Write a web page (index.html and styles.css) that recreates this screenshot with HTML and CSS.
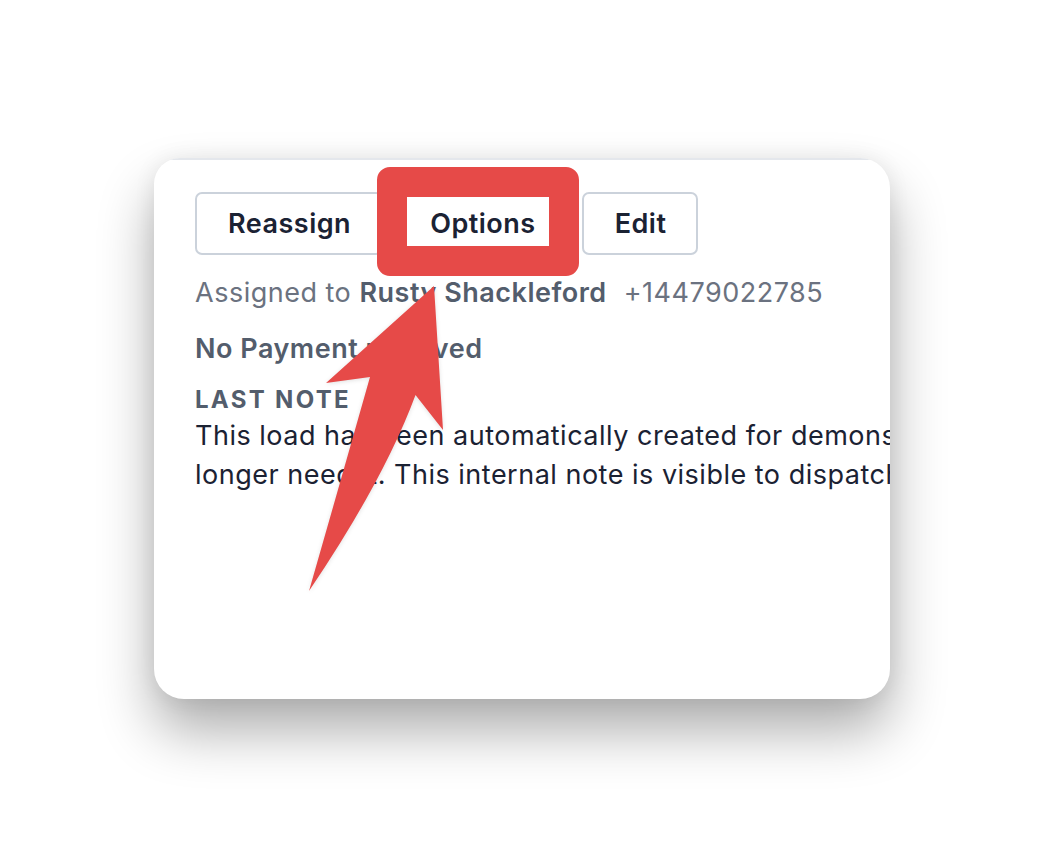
FILE: index.html
```html
<!DOCTYPE html>
<html lang="en">
<head>
<meta charset="utf-8">
<title>Load card</title>
<link rel="stylesheet" href="styles.css">
</head>
<body>
<div class="stage">
  <div class="card">
    <div class="card-inner">
      <div class="actions">
        <button class="btn">Reassign</button>
        <button class="btn">Options</button>
        <button class="btn">Edit</button>
      </div>
      <div class="assigned">Assigned to <strong>Rusty Shackleford</strong><span class="phone">+14479022785</span></div>
      <div class="payment">No Payment received</div>
      <div class="note-label">LAST NOTE</div>
      <div class="note-text">This load has been automatically created for demonstration purposes. Feel free to delete it if you no<br>longer need it. This internal note is visible to dispatchers only.</div>
    </div>
  </div>
  <div class="highlight"></div>
  <svg class="arrow" width="1044" height="854" viewBox="0 0 1044 854">
    <path d="M434 286 L443 430 L415.5 395 Q384 480 309 591 Q338 490 370 377 L326 383 Z" fill="#e64a48"/>
  </svg>
</div>
</body>
</html>
```
FILE: styles.css
```css
html, body {
  margin: 0;
  padding: 0;
  background: #ffffff;
}
body {
  font-family: Inter, "Noto Sans", "Liberation Sans", sans-serif;
}
.stage {
  position: relative;
  width: 1044px;
  height: 854px;
  padding: 158px 0 0 154px;
  box-sizing: border-box;
}
.card {
  width: 736px;
  height: 541px;
  background: #ffffff;
  border-radius: 26px 30px 30px 30px;
  overflow: hidden;
  box-shadow: 0 32px 55px rgba(0, 0, 0, 0.32), 0 0 22px rgba(0, 0, 0, 0.07);
}
.card-inner {
  border-top: 2px solid #e4e7ec;
  padding: 32px 0 0 41px;
  height: 100%;
  box-sizing: border-box;
}
.actions {
  display: flex;
  gap: 14px;
}
.btn {
  height: 63px;
  box-sizing: border-box;
  border: 2px solid #cbd2db;
  border-radius: 7px;
  background: #ffffff;
  padding: 0 30px 0 31px;
  font-family: Inter, "Noto Sans", sans-serif;
  font-size: 27px;
  letter-spacing: 0.5px;
  font-weight: 600;
  color: #1b2233;
}
.assigned {
  margin-top: 18px;
  font-size: 27px;
  letter-spacing: 0.5px;
  line-height: 39px;
  color: #6b7280;
  white-space: nowrap;
}
.assigned strong {
  font-weight: 600;
  color: #535d6c;
}
.phone {
  margin-left: 17px;
}
.payment {
  margin-top: 17px;
  font-size: 27px;
  letter-spacing: 0.5px;
  line-height: 39px;
  font-weight: 600;
  color: #535d6c;
}
.note-label {
  margin-top: 15px;
  font-size: 24px;
  line-height: 33px;
  font-weight: 700;
  letter-spacing: 2.3px;
  color: #535d6c;
}
.note-text {
  font-size: 27px;
  letter-spacing: 0.5px;
  line-height: 39px;
  color: #1b2233;
  white-space: nowrap;
}
.highlight {
  position: absolute;
  left: 377px;
  top: 167px;
  width: 202px;
  height: 109px;
  box-sizing: border-box;
  border: 30px solid #e64a48;
  border-radius: 13px;
}
.arrow {
  position: absolute;
  left: 0;
  top: 0;
  pointer-events: none;
  filter: drop-shadow(0 1px 2px rgba(0, 0, 0, 0.12));
}
```
